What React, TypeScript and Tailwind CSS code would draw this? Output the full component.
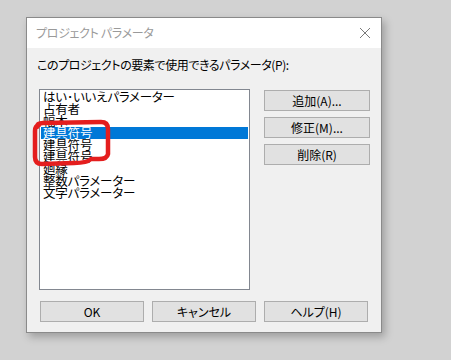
import React from "react";

const font = "font-['Noto_Sans_CJK_JP','Noto_Sans',sans-serif] [font-feature-settings:'palt']";

const items = [
  "はい･いいえパラメーター",
  "占有者",
  "幅木",
  "建具符号",
  "建具符号",
  "建具符号",
  "廻縁",
  "整数パラメーター",
  "文字パラメーター",
];

function Btn({ children, w }: { children: React.ReactNode; w: string }) {
  return (
    <div
      className={`${w} h-[21px] bg-[#e1e1e1] border border-[#adadad] flex items-center justify-center text-[12px] leading-none text-black`}
    >
      {children}
    </div>
  );
}

export default function App() {
  return (
    <div className={`w-[451px] h-[360px] bg-[#d2d2d2] pt-[17px] pl-[26px] relative overflow-hidden ${font}`}>
      <div className="w-[356px] h-[316px] border border-[#8a8a8a] bg-[#f0f0f0] flex flex-col shadow-[3px_4px_8px_rgba(0,0,0,0.25)]">
        <div className="h-[30px] bg-white flex items-center justify-between pl-[9px] pr-[10px]">
          <span className="text-[12px] text-[#9a9a9a] tracking-[-0.3px]">プロジェクト パラメータ</span>
          <svg width="12" height="12" viewBox="0 0 12 12">
            <path d="M1 1L11 11M11 1L1 11" stroke="#7a7a7a" strokeWidth="1" />
          </svg>
        </div>
        <div className="flex flex-col pl-[10px]">
          <div className="mt-[10px] h-[14px] text-[12px] leading-[14px] text-black tracking-[-0.4px]">
            このプロジェクトの要素で使用できるパラメータ(P):
          </div>
          <div className="flex mt-[17px]">
            <div className="ml-[2px] w-[211px] h-[201px] bg-white border border-[#828790] p-[1px] flex flex-col">
              {items.map((t, i) => (
                <div
                  key={i}
                  className={`h-[12px] shrink-0 overflow-hidden whitespace-nowrap pl-[2px] text-[12.5px] leading-[12px] tracking-[-0.2px] ${
                    i === 3 ? "bg-[#0078d7] text-white" : "text-black"
                  }`}
                >
                  {t}
                </div>
              ))}
            </div>
            <div className="ml-[14px] mt-[1px] flex flex-col gap-[6px]">
              <Btn w="w-[106px]">追加(A)...</Btn>
              <Btn w="w-[106px]">修正(M)...</Btn>
              <Btn w="w-[106px]">削除(R)</Btn>
            </div>
          </div>
          <div className="flex mt-[11px] ml-[3px] gap-[8px]">
            <Btn w="w-[104px]">OK</Btn>
            <Btn w="w-[104px]">キャンセル</Btn>
            <Btn w="w-[104px]">ヘルプ(H)</Btn>
          </div>
        </div>
      </div>
      <svg className="absolute left-0 top-0" width="451" height="360" viewBox="0 0 451 360">
        <path
          d="M37,127 Q37,123 43,123 L101,122 Q108,122 108,129 L108,154 Q107,159 99,159 L91,159 Q87,163 74,163 L42,164 Q35,164 35,157 L35,131 Q35,126 39,125"
          fill="none"
          stroke="#e41e1e"
          strokeWidth="4.5"
          strokeLinecap="round"
          strokeLinejoin="round"
        />
      </svg>
    </div>
  );
}
